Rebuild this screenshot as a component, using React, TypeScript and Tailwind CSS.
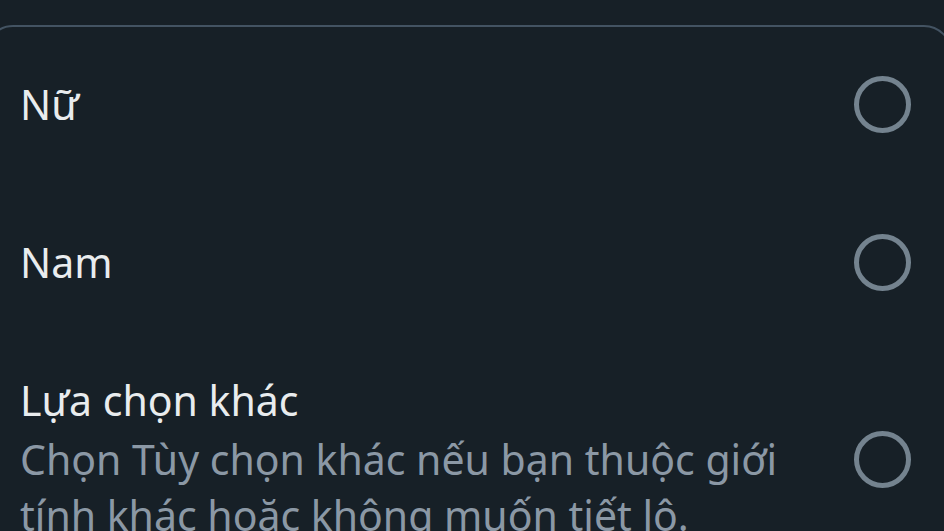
import React from "react";

function Radio() {
  return (
    <div className="w-[57px] h-[57px] shrink-0 rounded-full border-[5px] border-[#74838f]" />
  );
}

export default function App() {
  return (
    <div
      className="w-[944px] h-[531px] overflow-hidden bg-[#172027]"
      style={{ fontFamily: "'Noto Sans', 'Open Sans', sans-serif" }}
    >
      <div className="ml-[-15px] mr-[-8px] mt-[25px] border-2 border-[#435362] rounded-[28px] h-[700px]">
        <div className="flex items-center justify-between h-[158px] pb-[4px] pl-[33px] pr-[39px]">
          <span className="text-[41px] leading-[48px] text-[#e9ecee]">Nữ</span>
          <Radio />
        </div>
        <div className="flex items-center justify-between h-[158px] pb-[4px] pl-[33px] pr-[39px]">
          <span className="text-[41px] leading-[48px] text-[#e9ecee]">Nam</span>
          <Radio />
        </div>
        <div className="flex items-center justify-between pl-[33px] pr-[39px] pt-[33px]">
          <div className="w-[820px]">
            <div className="text-[41px] leading-[48px] text-[#e9ecee]">Lựa chọn khác</div>
            <div className="mt-[7px] text-[41px] leading-[56px] text-[#8b98a5]">
              Chọn Tùy chọn khác nếu bạn thuộc giới tính khác hoăc không muốn tiết lô.
            </div>
          </div>
          <Radio />
        </div>
      </div>
    </div>
  );
}
